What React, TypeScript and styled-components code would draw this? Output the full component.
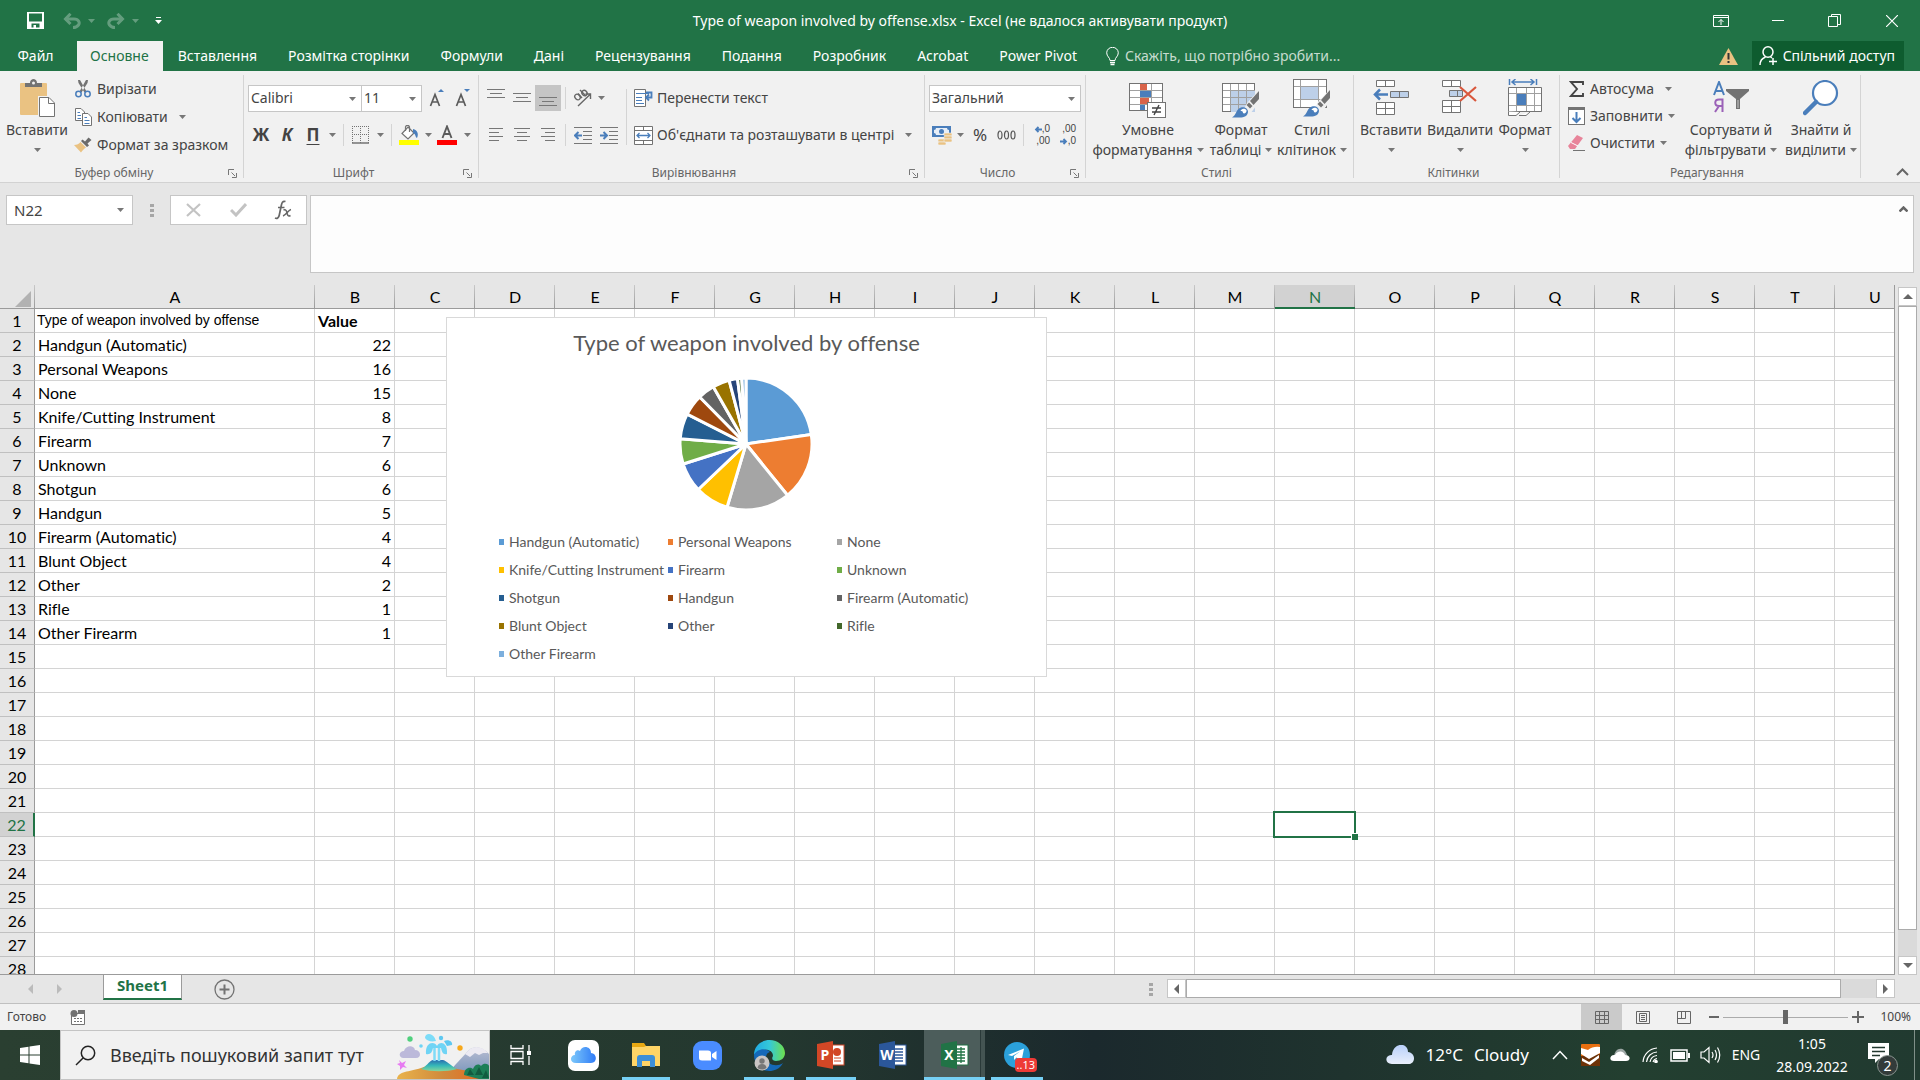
import React from "react";
import styled, { createGlobalStyle, css } from "styled-components";

const GlobalStyle = createGlobalStyle`
  * { box-sizing: border-box; }
  body { margin: 0; overflow: hidden; }
  button, input, select, textarea { font: inherit; color: inherit; }
  button { padding: 0; border: 0; background: none; cursor: default; }
  svg { display: block; flex: none; }
`;

const ui = `"Noto Sans", "Open Sans", sans-serif`;
const cellFont = `Lato, "Open Sans", sans-serif`;
const green = "#217346";
const blue = "#4a7ebb";
const grey = "#777777";

const Window = styled.div`
  display: flex;
  flex-direction: column;
  height: 100vh;
  overflow: hidden;
  background: #e6e6e6;
  color: #444;
  font: 14px/20px ${ui};
`;

/* ---------- Title bar ---------- */
const TitleBar = styled.header`
  display: grid;
  grid-template-columns: 1fr auto 1fr;
  align-items: center;
  height: 41px;
  flex: none;
  background: ${green};
  color: #fff;
`;
const QuickBar = styled.div`
  display: flex;
  align-items: center;
  height: 38px;
  padding-left: 23px;
  gap: 12px;
`;
const QuickButton = styled.button<{ $w: number; $dim?: boolean }>`
  display: flex;
  align-items: center;
  gap: 7px;
  width: ${(p) => p.$w}px;
  height: 28px;
  padding-left: ${(p) => (p.$dim ? 0 : 4)}px;
  opacity: ${(p) => (p.$dim ? 0.3 : 1)};
`;
const DocTitle = styled.h1`
  margin: 0;
  font-size: 14px;
  font-weight: 400;
`;
const WindowButtons = styled.div`
  display: flex;
  justify-content: flex-end;
  height: 38px;
`;
const WindowButton = styled.button`
  display: flex;
  align-items: center;
  justify-content: center;
  width: 57px;
`;

/* ---------- Tabs ---------- */
const TabBar = styled.nav`
  display: flex;
  align-items: stretch;
  height: 30px;
  flex: none;
  padding-right: 16px;
  background: ${green};
  color: #fff;
`;
const Tab = styled.button<{ $active?: boolean; $file?: boolean }>`
  padding: 0 16px 0 15px;
  ${(p) => p.$file && css`width: 77px; padding: 0 6px 0 0;`}
  ${(p) => p.$active && css`padding: 0 14px 0 13px; background: #f1f1f1; color: ${green};`}
`;
const TellMe = styled.label`
  display: flex;
  align-items: center;
  flex: 1;
  gap: 6px;
  padding-left: 13px;
  color: #c7dccf;
`;
const TellMeInput = styled.input`
  flex: 1;
  padding: 0;
  border: 0;
  outline: 0;
  background: none;
  &::placeholder { color: #c7dccf; opacity: 1; }
`;
const WarningButton = styled.button`
  width: 46px;
  display: flex;
  align-items: center;
  justify-content: center;
`;
const ShareButton = styled.button`
  display: flex;
  align-items: center;
  gap: 5px;
  height: 29px;
  padding: 0 9px 0 7px;
  background: #0e5c2f;
  color: #fff;
`;

/* ---------- Ribbon ---------- */
const Ribbon = styled.section`
  display: flex;
  flex: none;
  height: 112px;
  background: #f1f1f1;
  border-bottom: 1px solid #d2d2d2;
`;
const Group = styled.section<{ $w: number }>`
  display: flex;
  flex-direction: column;
  width: ${(p) => p.$w}px;
  flex: none;
  margin: 4px 0;
  border-right: 1px solid #d4d4d4;
`;
const GroupBody = styled.div`
  display: flex;
  flex: 1;
`;
const Caption = styled.footer`
  display: flex;
  align-items: center;
  height: 16px;
  margin-bottom: -3px;
  padding-right: 6px;
  font-size: 12px;
  color: #666;
`;
const CaptionText = styled.span`
  flex: 1;
  text-align: center;
`;
const BigButton = styled.button<{ $w: number }>`
  display: flex;
  flex-direction: column;
  align-items: center;
  width: ${(p) => p.$w}px;
  white-space: nowrap;
`;
const BigIcon = styled.span<{ $low?: boolean }>`
  display: flex;
  align-items: center;
  justify-content: center;
  height: 45px;
  padding-top: ${(p) => (p.$low ? 6 : 0)}px;
`;
const BigLabel = styled.span`
  display: flex;
  align-items: center;
  gap: 4px;
  min-height: 20px;
`;
const SmallColumn = styled.div<{ $pitch: number }>`
  display: flex;
  flex-direction: column;
  & > button { height: ${(p) => p.$pitch}px; }
`;
const SmallButton = styled.button`
  display: flex;
  align-items: center;
  gap: 5px;
  white-space: nowrap;
`;
const SmallIcon = styled.span`
  display: flex;
  justify-content: center;
  width: 18px;
`;
const CaretGap = styled.span<{ $wide: boolean }>`
  padding-left: ${(p) => (p.$wide ? 6 : 0)}px;
`;
const Rows = styled.div`
  display: flex;
  flex-direction: column;
  padding: 10px 0 0 4px;
  gap: 11px;
`;
const Row = styled.div`
  display: flex;
  align-items: center;
  height: 26px;
`;
const IconButton = styled.button<{ $w: number; $on?: boolean }>`
  display: flex;
  align-items: center;
  justify-content: center;
  width: ${(p) => p.$w}px;
  height: 26px;
  background: ${(p) => (p.$on ? "#c5c5c5" : "none")};
`;
const GlyphButton = styled(IconButton)<{ $look?: "bold" | "italic" | "underline" }>`
  font-size: 17px;
  font-weight: ${(p) => (p.$look ? 700 : 400)};
  font-style: ${(p) => (p.$look === "italic" ? "italic" : "normal")};
  text-decoration: ${(p) => (p.$look === "underline" ? "underline" : "none")};
  text-underline-offset: 3px;
`;
const Divider = styled.span<{ $w: number; $h?: number }>`
  width: ${(p) => p.$w}px;
  height: ${(p) => p.$h ?? 22}px;
  background: linear-gradient(#d4d4d4, #d4d4d4) center / 1px 100% no-repeat;
`;
const Combo = styled.div<{ $w: number }>`
  display: flex;
  position: relative;
  width: ${(p) => p.$w}px;
  height: 27px;
  border: 1px solid #c6c6c6;
  background: #fff;
  & + & { border-left: 0; }
  & > svg { position: absolute; right: 5px; top: 11px; pointer-events: none; }
`;
const ComboSelect = styled.select`
  flex: 1;
  padding: 0 2px;
  border: 0;
  outline: 0;
  appearance: none;
  background: none;
`;
const CollapseButton = styled.button`
  align-self: flex-end;
  margin: 0 10px 4px auto;
  width: 14px;
  height: 12px;
`;

/* ---------- Formula bar ---------- */
const FormulaBar = styled.section`
  display: flex;
  align-items: flex-start;
  flex: none;
  height: 102px;
  padding: 12px 6px 0;
`;
const NameBox = styled.label`
  display: flex;
  align-items: center;
  width: 127px;
  height: 30px;
  padding: 0 8px 0 7px;
  border: 1px solid #c6c6c6;
  background: #fff;
  font-size: 15px;
`;
const NameInput = styled.input`
  flex: 1;
  min-width: 0;
  padding: 0;
  border: 0;
  outline: 0;
`;
const DotsHolder = styled.span<{ $w: number }>`
  display: flex;
  align-items: center;
  justify-content: center;
  width: ${(p) => p.$w}px;
  height: 30px;
`;
const FormulaButtons = styled.div`
  display: flex;
  width: 137px;
  height: 30px;
  margin-right: 3px;
  border: 1px solid #c6c6c6;
  background: #fff;
  & > button { flex: 1; display: flex; align-items: center; justify-content: center; }
`;
const FormulaBox = styled.div`
  display: flex;
  flex: 1;
  height: 78px;
  border: 1px solid #c6c6c6;
  background: #fdfdfd;
`;
const FormulaInput = styled.textarea`
  flex: 1;
  border: 0;
  outline: 0;
  resize: none;
  background: none;
`;
const FormulaToggle = styled.button`
  width: 20px;
  height: 26px;
  display: flex;
  align-items: center;
  justify-content: center;
`;

/* ---------- Sheet ---------- */
const SheetArea = styled.main`
  display: flex;
  flex: 1;
  min-height: 0;
`;
const SheetView = styled.div`
  position: relative;
  flex: 1;
  min-width: 0;
  overflow: hidden;
  border-right: 1px solid #9b9b9b;
  border-bottom: 1px solid #9b9b9b;
  background: #fff;
`;
const Grid = styled.table`
  table-layout: fixed;
  width: 1915px;
  border-collapse: separate;
  border-spacing: 0;
  color: #000;
  font: 16px/23px ${cellFont};
  font-variant-ligatures: none;
`;
const ColHead = styled.th<{ $on?: boolean }>`
  height: 24px;
  padding: 0;
  font-weight: 400;
  color: ${(p) => (p.$on ? green : "#000")};
  border-bottom: 1px solid #9b9b9b;
  background:
    linear-gradient(#c8c8c8, #9b9b9b) right / 1px 100% no-repeat,
    ${(p) => (p.$on ? "#d2d2d2" : "#e6e6e6")};
  ${(p) => p.$on && css`box-shadow: inset 0 -1px 0 ${green}; border-bottom-color: ${green};`}
`;
const Corner = styled.td`
  padding: 0;
  border-bottom: 1px solid #9b9b9b;
  background: linear-gradient(#c8c8c8, #9b9b9b) right / 1px 100% no-repeat, #e6e6e6;
  & > svg { margin: 4px 0 0 15px; }
`;
const RowHead = styled.th<{ $on?: boolean }>`
  height: 24px;
  padding: 0;
  font-weight: 400;
  color: ${(p) => (p.$on ? green : "#000")};
  border-right: ${(p) => (p.$on ? `2px solid ${green}` : "1px solid #9b9b9b")};
  border-bottom: 1px solid #c0c0c0;
  background: ${(p) => (p.$on ? "#d2d2d2" : "#e6e6e6")};
`;
const Cell = styled.td<{ $num?: boolean; $look?: "label" | "bold" }>`
  height: 24px;
  padding: 0 3px;
  border-right: 1px solid #d4d4d4;
  border-bottom: 1px solid #d4d4d4;
  text-align: ${(p) => (p.$num ? "right" : "left")};
  white-space: nowrap;
  ${(p) => p.$look === "label" && css`padding-left: 2px; font-family: "Liberation Sans", Arial, sans-serif; font-size: 14px;`}
  ${(p) => p.$look === "bold" && css`font-weight: 700;`}
`;
const ActiveCell = styled(Cell)`
  position: relative;
  &::before {
    content: "";
    position: absolute;
    inset: -2px;
    border: 2px solid ${green};
    z-index: 1;
  }
  &::after {
    content: "";
    position: absolute;
    right: -4px;
    bottom: -4px;
    width: 6px;
    height: 6px;
    background: ${green};
    border: 1px solid #fff;
    border-width: 1px 0 0 1px;
    z-index: 2;
  }
`;
const Chart = styled.figure`
  position: absolute;
  left: 446px;
  top: 32px;
  width: 601px;
  height: 360px;
  margin: 0;
  display: flex;
  flex-direction: column;
  align-items: center;
  border: 1px solid #d9d9d9;
  background: #fff;
  color: #595959;
  font: 14px/28px ${cellFont};
  font-variant-ligatures: none;
`;
const ChartTitle = styled.figcaption`
  margin-top: 11px;
  font-size: 22px;
`;
const PieHolder = styled.div`
  margin: 20px 2px 0 0;
`;
const Legend = styled.ul`
  display: grid;
  grid-template-columns: repeat(3, 169px);
  align-self: stretch;
  margin: 17px 0 0 52px;
  padding: 0;
  list-style: none;
`;
const LegendItem = styled.li<{ $color: string }>`
  display: flex;
  align-items: center;
  gap: 5px;
  white-space: nowrap;
  &::before { content: ""; width: 5px; height: 6px; background: ${(p) => p.$color}; }
`;
const VScroll = styled.div`
  display: flex;
  flex-direction: column;
  width: 19px;
  margin: 2px 3px 0 3px;
  background: #dadada;
`;
const ScrollButton = styled.button`
  display: flex;
  align-items: center;
  justify-content: center;
  width: 19px;
  height: 19px;
  flex: none;
  border: 1px solid #c6c6c6;
  background: #fff;
`;
const VThumb = styled.div`
  flex: 1;
  margin-bottom: 26px;
  border: 1px solid #ababab;
  background: #fff;
`;

/* ---------- Sheet tabs ---------- */
const SheetBar = styled.nav`
  display: flex;
  align-items: center;
  height: 28px;
  flex: none;
  padding-right: 25px;
`;
const SheetNav = styled.div`
  display: flex;
  width: 103px;
  padding-left: 16px;
  & > button { width: 29px; display: flex; justify-content: center; }
`;
const SheetTab = styled.button`
  align-self: flex-start;
  width: 79px;
  height: 26px;
  margin-top: -1px;
  padding-bottom: 3px;
  border: 1px solid #9b9b9b;
  border-width: 0 1px;
  border-bottom: 2px solid ${green};
  background: #fff;
  color: ${green};
  font-size: 15px;
  font-weight: 700;
`;
const AddSheet = styled.button`
  margin-left: 32px;
`;
const HScroll = styled.div`
  display: flex;
  width: 728px;
  margin-bottom: 1px;
  background: #dadada;
`;
const HThumb = styled.div`
  flex: 1;
  margin-right: 35px;
  border: 1px solid #ababab;
  background: #fff;
`;
const Spacer = styled.span`
  flex: 1;
`;

/* ---------- Status bar ---------- */
const StatusBar = styled.footer`
  display: flex;
  align-items: center;
  height: 27px;
  flex: none;
  padding: 0 9px 0 7px;
  border-top: 1px solid #c0c0c0;
  background: #f1f1f1;
  font-size: 12px;
`;
const MacroButton = styled.button`
  margin-left: 24px;
`;
const ViewButton = styled.button<{ $on?: boolean }>`
  display: flex;
  align-items: center;
  justify-content: center;
  width: 41px;
  height: 26px;
  background: ${(p) => (p.$on ? "#cacaca" : "none")};
`;
const ZoomButton = styled.button`
  display: flex;
  align-items: center;
  justify-content: center;
  width: 19px;
  height: 26px;
`;
const ZoomSlider = styled.input`
  appearance: none;
  width: 125px;
  height: 14px;
  margin: 0;
  background: linear-gradient(#ababab, #ababab) center / 100% 1px no-repeat;
  &::-webkit-slider-thumb {
    appearance: none;
    width: 5px;
    height: 14px;
    background: #666;
  }
`;
const ZoomValue = styled.output`
  width: 44px;
  text-align: right;
  font-size: 12px;
`;

/* ---------- Taskbar ---------- */
const Taskbar = styled.footer`
  display: flex;
  height: 50px;
  flex: none;
  background: linear-gradient(90deg, #2a3f31 0%, #24382f 40%, #1b292d 57%, #1f332e 70%, #233f30 85%, #213a30 100%);
  color: #fff;
`;
const StartButton = styled.button`
  display: flex;
  align-items: center;
  justify-content: center;
  width: 60px;
`;
const Search = styled.label`
  display: flex;
  align-items: center;
  width: 430px;
  border: 1px solid #c4c4c4;
  background: #f1f1f1;
  color: #222;
  font-size: 18px;
  & > svg:first-child { margin: 0 14px; }
`;
const SearchInput = styled.input`
  flex: 1;
  min-width: 0;
  padding: 0;
  border: 0;
  outline: 0;
  background: none;
  &::placeholder { color: #333; opacity: 1; }
`;
const TaskButton = styled.button<{ $w?: number; $run?: boolean; $on?: boolean }>`
  position: relative;
  display: flex;
  align-items: center;
  justify-content: center;
  width: ${(p) => p.$w ?? 62}px;
  background: ${(p) => (p.$on ? "linear-gradient(90deg, #4c5d5b 56px, #2a3a39 56px, #2a3a39 57px, #445452 57px)" : "none")};
  ${(p) => p.$run && css`
    &::after {
      content: "";
      position: absolute;
      left: ${p.$on ? 0 : 6}px;
      right: ${p.$on ? 0 : 6}px;
      bottom: 0;
      height: 3px;
      background: #76d0f5;
    }
  `}
`;
const CountBadge = styled.span`
  position: absolute;
  right: 12px;
  bottom: 8px;
  padding: 0 2px;
  border-radius: 4px;
  background: #ee3a36;
  font-size: 11px;
  line-height: 14px;
`;
const Weather = styled.button`
  display: flex;
  align-items: center;
  gap: 11px;
  margin-right: 16px;
  font-size: 17px;
`;
const Tray = styled.div`
  display: flex;
  & > button { width: 30px; display: flex; align-items: center; justify-content: center; }
`;
const Language = styled.button`
  width: 42px;
`;
const Clock = styled.time`
  display: flex;
  flex-direction: column;
  justify-content: center;
  width: 90px;
  text-align: center;
  line-height: 23px;
`;
const Notifications = styled.button`
  position: relative;
  width: 55px;
  margin-right: 2px;
  & > svg { margin-left: 11px; margin-top: -4px; }
`;
const NoticeCount = styled.span`
  position: absolute;
  left: 20px;
  bottom: 4px;
  width: 21px;
  height: 21px;
  border: 1px solid #8b9691;
  border-radius: 50%;
  background: #333b3a;
  font-size: 14px;
  line-height: 19px;
`;
const ShowDesktop = styled.button`
  width: 6px;
  border-left: 1px solid #7f8f88;
`;

/* ---------- Drawings ---------- */
const Caret = () => (
  <svg width="7" height="4"><path d="M0 0H7L3.500 4Z" fill={grey} /></svg>
);
const Launcher = () => (
  <svg width="9" height="9" fill="none" stroke={grey}>
    <path d="M.5 6V.5H6M3.500 3.500L7 7M8.500 4V8.500H4" />
  </svg>
);
const Dots = () => (
  <svg width="4" height="13" fill="#a6a6a6"><path d="M0 0h4v3H0zM0 5h4v3H0zM0 10h4v3H0z" /></svg>
);
const Tri = ({ dir, color = "#666" }: { dir: "l" | "r" | "u" | "d"; color?: string }) => {
  const d = { l: "M6 0V10L1 5Z", r: "M1 0V10L6 5Z", u: "M0 6H10L5 1Z", d: "M0 1H10L5 6Z" }[dir];
  const flat = dir === "u" || dir === "d";
  return <svg width={flat ? 10 : 7} height={flat ? 7 : 10}><path d={d} fill={color} /></svg>;
};
const Lines = ({ w, y }: { w: number[][]; y: number }) => (
  <svg width="18" height="20" stroke={grey}>
    {w.map(([a, b], i) => <path key={i} d={`M${a} ${y + i * 4 + 0.5}H${b}`} />)}
  </svg>
);
const WhiteCaret = () => (
  <svg width="7" height="4"><path d="M0 0H7L3.500 4Z" fill="#fff" /></svg>
);
const UndoIcon = ({ flip }: { flip?: boolean }) => (
  <svg width="18" height="16" fill="none" stroke="#fff" strokeWidth="3">
    <g transform={flip ? "translate(18 0) scale(-1 1)" : undefined}>
      <path d="M2 6H11C16 6 17 10 15.500 12S12 14.500 10 14.500" />
      <path d="M7.500 .8L2.500 6L7.500 11" />
    </g>
  </svg>
);
const PasteIcon = () => (
  <svg width="35" height="38">
    <rect x="0" y="4" width="27" height="32" rx="1" fill="#eac282" />
    <path d="M5 8V4H10C10 1 12 0 13.500 0S17 1 17 4H22V8Z" fill="#737373" />
    <circle cx="13.500" cy="4" r="1.500" fill="#f1f1f1" />
    <path d="M18 17H30L36 23V38H18Z" fill="#f1f1f1" />
    <path d="M19.500 18.500H29L34.500 24V37.500H19.500Z" fill="#fff" stroke="#737373" />
    <path d="M28.500 18.500V24.500H34.500" fill="none" stroke="#737373" />
  </svg>
);
const CutIcon = () => (
  <svg width="16" height="18" fill="none">
    <path d="M3 0H5L11.500 11.500L9.500 12.500L3.500 3ZM13 0H11L4.500 11.500L6.500 12.500L12.500 3Z" fill="#737373" />
    <circle cx="3.500" cy="14" r="2.700" stroke={blue} strokeWidth="1.500" />
    <circle cx="12.500" cy="14" r="2.700" stroke={blue} strokeWidth="1.500" />
  </svg>
);
const CopyIcon = () => (
  <svg width="17" height="18" fill="#fff" stroke="#737373">
    <path d="M.5 .5H6L9.500 4V12.500H.5Z" />
    <path d="M2.500 4.500H5M2.500 7.500H6M2.500 10.500H6" stroke={blue} />
    <path d="M7.500 5.500H13L16.500 9V17.500H7.500Z" />
    <path d="M9.500 9.500H12M9.500 12.500H14.500M9.500 15.500H14.500" stroke={blue} />
  </svg>
);
const BrushIcon = () => (
  <svg width="18" height="16">
    <path d="M0 8C3 8 5 7 6.500 5L12 10.500C10 12 8.500 13 7 15.500Z" fill="#eac282" />
    <path d="M7 4L8.500 2.500L11 4.500L14.500 .5L17.500 3L13.500 6.500L15 8.500L13 10Z" fill="#6b6b6b" />
  </svg>
);
const FontSizeIcon = ({ up }: { up?: boolean }) => (
  <svg width="16" height="20">
    <path d="M1.500 18L6 6.500L10.500 18M3 14H9" fill="none" stroke="#5b5b5b" strokeWidth="1.700" />
    <path d={up ? "M9 4H15L12 1Z" : "M9 1H15L12 4Z"} fill={blue} />
  </svg>
);
const BordersIcon = () => (
  <svg width="17" height="18" fill="none" stroke="#737373">
    <path d="M.5 0V17M8.500 0V17M16.500 0V17M0 .5H17M0 8.500H17" strokeDasharray="1 1" />
    <path d="M0 17H17" strokeWidth="1.500" />
  </svg>
);
const FillIcon = () => (
  <svg width="20" height="20">
    <path d="M9 2L15 8L9 14L3 8.500Z" fill="#fff" stroke="#737373" strokeWidth="1.200" />
    <path d="M6.500 6V2C7 -.2 10 -.2 10.500 2V7" fill="none" stroke="#737373" strokeWidth="1.200" />
    <path d="M14 4C18.500 5 20 9 18 13C16 12 17 9 14 8Z" fill={blue} />
    <rect y="15" width="20" height="5" fill="#ff0" />
  </svg>
);
const FontColorIcon = () => (
  <svg width="20" height="20">
    <path d="M5.500 13L10 1.500L14.500 13M7 9H13" fill="none" stroke="#5b5b5b" strokeWidth="1.900" />
    <rect y="15" width="20" height="5" fill="#f00" />
  </svg>
);
const AngleIcon = () => (
  <svg width="20" height="20" fill="none" stroke="#666" strokeWidth="1.400">
    <ellipse cx="4.500" cy="9" rx="2.400" ry="3" transform="rotate(-45 4.500 9)" />
    <path d="M5 5.500L9 10M7 2L13 8" />
    <ellipse cx="11.500" cy="5" rx="2.400" ry="2.800" transform="rotate(-45 11.500 5)" />
    <path d="M5 18L17 6.500M17.500 11V6H12.500" />
  </svg>
);
const IndentIcon = ({ right }: { right?: boolean }) => (
  <svg width="18" height="17" fill="none" stroke={grey}>
    <path d="M0 .5H18M9 4.500H18M9 8.500H18M9 12.500H18M0 16.500H18" />
    <path d={right ? "M0 8.500H6M3.500 5L7 8.500L3.500 12" : "M1.500 8.500H8M4.500 5L1 8.500L4.500 12"} stroke={blue} strokeWidth="2" />
  </svg>
);
const WrapIcon = () => (
  <svg width="19" height="18" fill="none" stroke="#737373">
    <path d="M.5 17.500V.5H11.500V17.500Z" fill="#fff" stroke="#737373" />
    <path d="M2 4.500H15M2 8.500H8M2 11.500H8M2 14.500H10" stroke={blue} />
    <path d="M12 3.500H17.500V8.500H12M15 5.500L12 8.500L15 11.500" stroke={blue} strokeWidth="1.800" />
  </svg>
);
const MergeIcon = () => (
  <svg width="19" height="19" fill="#fff" stroke="#737373">
    <path d="M.5 .5H18.500V18.500H.5ZM.5 4.500H18.500M.5 14.500H18.500M9.500 .5V4.500M9.500 14.500V18.500" />
    <path d="M3 9.500H16M5.500 7L3 9.500L5.500 12M13.500 7L16 9.500L13.500 12" fill="none" stroke={blue} strokeWidth="1.300" />
  </svg>
);
const MoneyIcon = () => (
  <svg width="20" height="19">
    <rect width="19" height="11" fill={blue} />
    <path d="M2 4Q4 4 4 2H15Q15 4 17 4V7Q15 7 15 9H4Q4 7 2 7Z" fill="#e7eef7" />
    <circle cx="9.500" cy="5.500" r="2.500" fill={blue} />
    <g fill="#eac282" stroke="#f1f1f1" strokeWidth=".6">
      <rect x="6" y="13" width="8" height="3" rx="1" /><rect x="6" y="16" width="8" height="3" rx="1" />
      <rect x="12" y="7" width="8" height="3" rx="1" /><rect x="12" y="10" width="8" height="3" rx="1" />
      <rect x="12" y="13" width="8" height="3" rx="1" />
    </g>
  </svg>
);
const DecimalStack = styled.span`
  display: flex;
  flex-direction: column;
  align-items: flex-end;
  font: 10px/12px "Liberation Sans", Arial, sans-serif;
`;
const DecimalLine = styled.span`
  display: flex;
  align-items: center;
`;
const BlueArrow = ({ right }: { right?: boolean }) => (
  <svg width="8" height="7" fill="none" stroke={blue} strokeWidth="1.800">
    <path d={right ? "M0 3.500H6M3.500 1L6 3.500L3.500 6" : "M8 3.500H2M4.500 1L2 3.500L4.500 6"} />
  </svg>
);
const DecimalIcon = ({ less }: { less?: boolean }) => (
  <DecimalStack>
    <DecimalLine>{less ? ",00" : <><BlueArrow />,0</>}</DecimalLine>
    <DecimalLine>{less ? <><BlueArrow right />,0</> : ",00"}</DecimalLine>
  </DecimalStack>
);
const PaintBrush = () => (
  <g>
    <path d="M38 6L25 20L22 26L28 31L38 18Z" fill="#f1f1f1" />
    <path d="M37 8L28 18L31.500 22L37 16Z" fill="#737373" />
    <path d="M27 19.500L30.500 23L28 25.500L24.500 22Z" fill="#737373" />
    <path d="M10 34.500C14 32 14 28 17 25.500C21 22.500 26 25 26 28.500C26 33 22 34.500 18 34.500Z" fill={blue} />
    <path d="M18.500 28C19 26 22 24.500 24.500 27C25 30 22 31 21 30C21 28 19.500 28 18.500 28Z" fill="#fff" />
  </g>
);
const CondIcon = () => (
  <svg width="38" height="35">
    <rect x=".5" y=".5" width="33" height="27" fill="#fff" stroke="#737373" />
    <path d="M1 7.500H33M1 14.500H33M1 21.500H33M11.500 1V27M22.500 1V27" stroke="#a0a0a0" />
    <path d="M11 1H18V7H11ZM11 15H20V21H11Z" fill="#d9644a" />
    <path d="M11 8H22V14H11ZM11 22H16V27H11Z" fill={blue} />
    <rect x="18.500" y="19.500" width="18" height="15" fill="#fff" stroke="#737373" />
    <path d="M23 25H32M23 29H32M30 22L25 32" stroke="#444" strokeWidth="1.400" />
  </svg>
);
const TableStyleIcon = () => (
  <svg width="38" height="36">
    <rect x=".5" y=".5" width="32" height="28" fill="#fff" stroke="#737373" />
    <rect x="9" y="8" width="24" height="21" fill="#bdd0e9" />
    <path d="M1 7.500H33M1 14.500H33M1 21.500H33M8.500 1V28M16.500 1V28M24.500 1V28" stroke="#a0a0a0" fill="none" />
    <PaintBrush />
  </svg>
);
const CellStyleIcon = () => (
  <svg width="38" height="38">
    <rect x=".5" y=".5" width="33" height="28" fill="#fff" stroke="#737373" />
    <path d="M1 7.500H33M1 20.500H33M7.500 1V28M25.500 1V28" stroke="#a0a0a0" />
    <rect x="8" y="8" width="17" height="12" fill="#bdd0e9" />
    <g transform="translate(0 3)"><PaintBrush /></g>
  </svg>
);
const InsertCellsIcon = () => (
  <svg width="36" height="36" fill="#fff" stroke="#737373">
    <path d="M3.500 .5H21.500V6.500H3.500ZM12.500 .5V6.500M3.500 22.500H21.500V34.500H3.500ZM12.500 22.500V34.500M3.500 28.500H21.500" />
    <path d="M17.500 11.500H35.500V17.500H17.500ZM26.500 11.500V17.500" fill="#bdd0e9" />
    <path d="M2 14.500H15M7 9.500L2 14.500L7 19.500" fill="none" stroke={blue} strokeWidth="2.500" />
  </svg>
);
const DeleteCellsIcon = () => (
  <svg width="36" height="36" fill="#fff" stroke="#737373">
    <path d="M.5 .5H18.500V6.500H.5ZM9.500 .5V6.500M.5 20.500H18.500V32.500H.5ZM9.500 20.500V32.500M.5 26.500H18.500" />
    <path d="M7.500 10.500H20.500V16.500H7.500ZM15.500 10.500V16.500" fill="#bdd0e9" />
    <path d="M18 7L34 21M34 7L18 21" stroke="#d9573c" strokeWidth="2.200" />
  </svg>
);
const FormatCellsIcon = () => (
  <svg width="35" height="38" fill="#fff" stroke="#737373">
    <path d="M1.500 0V6M28.500 0V6M4 3H26M7.500 0L4 3L7.500 6M22.500 0L26 3L22.500 6" fill="none" stroke={blue} strokeWidth="1.500" />
    <path d="M.5 8.500H33.500V32.500H.5Z" />
    <path d="M1 14.500H33M1 26.500H33M8.500 9V32M18.500 9V32M26.500 9V32" stroke="#a0a0a0" />
    <rect x="9" y="15" width="9" height="11" fill={blue} stroke="none" />
    <path d="M.5 32.500V36.500H8L12 33M11 36.500H18L22 33" />
  </svg>
);
const SumIcon = () => (
  <svg width="15" height="16" fill="none" stroke="#444" strokeWidth="1.900">
    <path d="M14 4V1H2L8 8L2 15H14V12" />
  </svg>
);
const FillDownIcon = () => (
  <svg width="17" height="18">
    <rect x=".5" y=".5" width="16" height="17" fill="#fff" stroke="#737373" />
    <rect width="17" height="3" fill="#737373" />
    <path d="M8.500 5V15M4.500 11L8.500 15L12.500 11" fill="none" stroke={blue} strokeWidth="2" />
  </svg>
);
const EraserIcon = () => (
  <svg width="18" height="17">
    <path d="M1 12L10 1L16 4L8 15H3Z" fill="#e8849a" />
    <path d="M4 8.500L11 12" stroke="#fff" />
    <path d="M6 16.500H18" stroke="#737373" />
  </svg>
);
const SortIcon = () => (
  <svg width="36" height="34">
    <path d="M1 14L6 1L11 14M3 10H9" fill="none" stroke={blue} strokeWidth="2" />
    <path d="M9.500 31V18.500H6C1 18.500 1 25 6 25H9.500M6 25L2 31" fill="none" stroke="#9b62b8" strokeWidth="2" />
    <path d="M13 8H36V10L27 18V28H23V18L13 10Z" fill="#737373" />
    <path d="M25 19V27" stroke="#c8c8c8" />
  </svg>
);
const FindIcon = () => (
  <svg width="36" height="36" fill="none" stroke={blue}>
    <circle cx="22" cy="13" r="12" fill="#fff" strokeWidth="2.200" />
    <path d="M13 22L2 33" strokeWidth="4.500" strokeLinecap="round" />
  </svg>
);

const COLORS = ["#5b9bd5", "#ed7d31", "#a5a5a5", "#ffc000", "#4472c4", "#70ad47", "#255e91", "#9e480e", "#636363", "#997300", "#264478", "#43682b", "#7cafdd"];
const DATA: [string, number][] = [
  ["Handgun (Automatic)", 22], ["Personal Weapons", 16], ["None", 15], ["Knife/Cutting Instrument", 8],
  ["Firearm", 7], ["Unknown", 6], ["Shotgun", 6], ["Handgun", 5], ["Firearm (Automatic)", 4],
  ["Blunt Object", 4], ["Other", 2], ["Rifle", 1], ["Other Firearm", 1],
];

const Pie = () => {
  const total = DATA.reduce((s, d) => s + d[1], 0);
  let acc = 0;
  const at = (v: number) => {
    const a = (v / total) * Math.PI * 2;
    return `${67 + 66 * Math.sin(a)} ${67 - 66 * Math.cos(a)}`;
  };
  return (
    <svg width="134" height="134" stroke="#fff" strokeWidth="3" strokeLinejoin="round">
      {DATA.map(([name, v], i) => {
        const from = at(acc);
        acc += v;
        return <path key={name} d={`M67 67L${from}A66 66 0 0 1 ${at(acc)}Z`} fill={COLORS[i]} />;
      })}
    </svg>
  );
};

const COLS = "ABCDEFGHIJKLMNOPQRSTU".split("");
const ROWS = Array.from({ length: 28 }, (_, i) => i + 1);

const OfficeIcon = ({ color, letter, children }: { color: string; letter: string; children: React.ReactNode }) => (
  <svg width="28" height="28">
    <rect x="12" y="4" width="15" height="20" fill="#fff" stroke={color} />
    {children}
    <path d="M0 3L16 0V28L0 25Z" fill={color} />
    <text x="8" y="19" textAnchor="middle" fontFamily="Open Sans" fontWeight="700" fontSize="14" fill="#fff">{letter}</text>
  </svg>
);

const GeyserArt = () => (
  <svg width="92" height="47" viewBox="0 0 92 47">
    <defs>
      <linearGradient id="ground" x1="0" x2="1"><stop offset="0" stopColor="#e9b34c" /><stop offset=".5" stopColor="#d08a3c" /><stop offset="1" stopColor="#e8641c" /></linearGradient>
      <linearGradient id="mount" x1="0" y1="0" x2="0" y2="1"><stop offset="0" stopColor="#b9bdd2" /><stop offset="1" stopColor="#6f8fb8" /></linearGradient>
      <linearGradient id="pool" x1="0" y1="0" x2="0" y2="1"><stop offset="0" stopColor="#2b6fb0" /><stop offset=".5" stopColor="#35b8b8" /><stop offset="1" stopColor="#86d69a" /></linearGradient>
    </defs>
    <path d="M52 40L59 32L72 18C77 14 84 14 92 22V47H52Z" fill="url(#mount)" />
    <path d="M68 22L73 17C79 13 86 15 91 21L86 21L82 23L78 21L73 25Z" fill="#eceaf2" />
    <path d="M0 47C1 39 12 40 24 36L32 33H52L60 37C72 39 84 41 92 47Z" fill="url(#ground)" />
    <path d="M24 37C29 35 32 29 36 28H46C50 29 54 34 60 37C50 40 34 40 24 37Z" fill="url(#pool)" />
    <path d="M37.500 29V14M42 29V14" stroke="#7fdcf7" strokeWidth="2.500" />
    <path d="M29 22C28 9 38 9 40 14C42 9 51 9 50 22C46 23 45 20 44 16H36C35 21 33 23 29 22Z" fill="#6fd4f5" />
    <path d="M28 6C28 2 32 1 35 3C38 5 38 7 39 9C34 10 30 9 28 6Z" fill="#7cdcf8" />
    <circle cx="44" cy="6" r="2.200" fill="#5fc8f0" />
    <path d="M47 9C52 7 56 10 55 13L50 14Z" fill="#5fc8f0" />
    <circle cx="24" cy="14" r="1.800" fill="#6fd4f5" />
    <path d="M6 26C1 25 2 19 7 19C9 13 17 13 18 18C24 18 25 26 19 26Z" fill="#bcb9da" />
    <circle cx="13" cy="7" r="2.700" fill="#4fd07d" />
    <circle cx="63" cy="16" r="2.700" fill="#f7a81b" />
    <path d="M2 28L5 31L9 29L7 33L10 36L6 35L3 38L3 34L0 32L3 31Z" fill="#e77bf2" />
    <path d="M67 43C67 36 73 34 76 37C78 31 83 32 84 34C87 30 92 32 92 34V47H82Z" fill="#1d7f57" />
    <path d="M73 37L70 43H77ZM82 35L78 43H86ZM89 38L85 46H92Z" fill="#125c40" />
  </svg>
);

const GroupCaption = ({ text, launcher }: { text: string; launcher?: boolean }) => (
  <Caption>
    <CaptionText>{text}</CaptionText>
    {launcher && <button aria-label={text}><Launcher /></button>}
  </Caption>
);

const Big = ({ w, icon, label, second, low }: { w: number; icon: React.ReactNode; label: string; second?: string; low?: boolean }) => (
  <BigButton $w={w}>
    <BigIcon $low={low}>{icon}</BigIcon>
    <BigLabel>{label}</BigLabel>
    <BigLabel>{second}<Caret /></BigLabel>
  </BigButton>
);

const Small = ({ icon, label, caret }: { icon: React.ReactNode; label: string; caret?: "near" | "far" }) => (
  <SmallButton>
    <SmallIcon>{icon}</SmallIcon>
    {label}
    {caret && <CaretGap $wide={caret === "far"}><Caret /></CaretGap>}
  </SmallButton>
);

const BodyPad = styled.div<{ $l: number }>`
  display: flex;
  padding-left: ${(p) => p.$l}px;
`;
const AlignPanel = styled.div`
  display: flex;
  align-items: flex-start;
  & > span { margin-top: 14px; }
`;
const TextRows = styled.div`
  display: flex;
  flex-direction: column;
  padding: 10px 0 0 4px;
  gap: 11px;
  & > button { height: 26px; }
`;

export default function App() {
  return (
    <Window>
      <GlobalStyle />
      <TitleBar>
        <QuickBar>
          <QuickButton $w={28} aria-label="Зберегти">
            <svg width="17" height="17"><path d="M0 0H17V17H0Z" fill="#fff" /><path d="M2 1.500H15V9.500H2ZM4.500 11.500H12.500V15.500H4.500Z" fill={green} /><path d="M6.500 13H9V16H6.500Z" fill="#fff" /></svg>
          </QuickButton>
          <QuickButton $w={32} $dim aria-label="Скасувати"><UndoIcon /><WhiteCaret /></QuickButton>
          <QuickButton $w={32} $dim aria-label="Повторити"><UndoIcon flip /><WhiteCaret /></QuickButton>
          <QuickButton $w={14} aria-label="Налаштувати панель">
            <svg width="7" height="7"><path d="M1 0H6V1H1ZM0 3H7L3.500 7Z" fill="#fff" /></svg>
          </QuickButton>
        </QuickBar>
        <DocTitle>Type of weapon involved by offense.xlsx - Excel (не вдалося активувати продукт)</DocTitle>
        <WindowButtons>
          <WindowButton aria-label="Параметри стрічки">
            <svg width="16" height="12" fill="none" stroke="#fff"><path d="M.5 .5H15.500V11.500H.5ZM.5 2.500H15.500M8 10V4.500M5.500 7L8 4.500L10.500 7" /></svg>
          </WindowButton>
          <WindowButton aria-label="Згорнути"><svg width="12" height="2"><path d="M0 0H12V1H0Z" fill="#fff" /></svg></WindowButton>
          <WindowButton aria-label="Відновити">
            <svg width="13" height="13" fill="none" stroke="#fff"><path d="M.5 2.500H9.500V12.500H.5ZM3.500 2.500V.5H12.500V10.500H9.500" /></svg>
          </WindowButton>
          <WindowButton aria-label="Закрити"><svg width="12" height="12"><path d="M0 0L12 12M12 0L0 12" stroke="#fff" strokeWidth="1.200" /></svg></WindowButton>
        </WindowButtons>
      </TitleBar>

      <TabBar>
        <Tab $file>Файл</Tab>
        <Tab $active>Основне</Tab>
        {["Вставлення", "Розмітка сторінки", "Формули", "Дані", "Рецензування", "Подання", "Розробник", "Acrobat", "Power Pivot"].map((t) => (
          <Tab key={t}>{t}</Tab>
        ))}
        <TellMe>
          <svg width="13" height="19" fill="none" stroke="#fff"><path d="M4 13.500C4 10.500 .7 9.500 .7 5.800A5.600 5.300 0 0 1 12.300 5.800C12.300 9.500 9 10.500 9 13.500Z" /><path d="M4 15.500H9M4.500 17.500H8.500" strokeWidth="1.500" /></svg>
          <TellMeInput aria-label="Допомога" placeholder="Скажіть, що потрібно зробити..." />
        </TellMe>
        <WarningButton aria-label="Попередження">
          <svg width="19" height="17"><path d="M9.500 0L19 17H0Z" fill="#eac282" /><path d="M8.500 5H10.500V11.500H8.500ZM8.500 13H10.500V15H8.500Z" fill="#333" /></svg>
        </WarningButton>
        <ShareButton>
          <svg width="19" height="20" fill="none" stroke="#fff" strokeWidth="1.500"><ellipse cx="9" cy="6" rx="5" ry="5.200" /><path d="M1 19C1 14.500 4 12 6.500 11M11.500 11L13 12M14 12V19M10 15.500H18" /></svg>
          Спільний доступ
        </ShareButton>
      </TabBar>

      <Ribbon>
        <Group $w={244}>
          <GroupBody>
            <BodyPad $l={3}><Big w={68} icon={<PasteIcon />} label="Вставити" /></BodyPad>
            <BodyPad $l={3}>
              <SmallColumn $pitch={28}>
                <Small icon={<CutIcon />} label="Вирізати" />
                <Small icon={<CopyIcon />} label="Копіювати" caret="far" />
                <Small icon={<BrushIcon />} label="Формат за зразком" />
              </SmallColumn>
            </BodyPad>
          </GroupBody>
          <GroupCaption text="Буфер обміну" launcher />
        </Group>

        <Group $w={235}>
          <GroupBody>
            <Rows>
              <Row>
                <Combo $w={114}><ComboSelect aria-label="Шрифт"><option>Calibri</option></ComboSelect><Caret /></Combo>
                <Combo $w={60}><ComboSelect aria-label="Розмір шрифту"><option>11</option></ComboSelect><Caret /></Combo>
                <IconButton $w={30} aria-label="Збільшити"><FontSizeIcon up /></IconButton>
                <IconButton $w={22} aria-label="Зменшити"><FontSizeIcon /></IconButton>
              </Row>
              <Row>
                <GlyphButton $w={26} $look="bold">Ж</GlyphButton>
                <GlyphButton $w={26} $look="italic">К</GlyphButton>
                <GlyphButton $w={26} $look="underline">П</GlyphButton>
                <IconButton $w={12} aria-label="Підкреслення"><Caret /></IconButton>
                <Divider $w={11} />
                <IconButton $w={22} aria-label="Межі"><BordersIcon /></IconButton>
                <IconButton $w={18} aria-label="Види меж"><Caret /></IconButton>
                <Divider $w={4} />
                <IconButton $w={31} aria-label="Заливка"><FillIcon /></IconButton>
                <IconButton $w={8} aria-label="Кольори заливки"><Caret /></IconButton>
                <IconButton $w={30} aria-label="Колір тексту"><FontColorIcon /></IconButton>
                <IconButton $w={10} aria-label="Кольори тексту"><Caret /></IconButton>
              </Row>
            </Rows>
          </GroupBody>
          <GroupCaption text="Шрифт" launcher />
        </Group>

        <Group $w={446}>
          <GroupBody>
            <AlignPanel>
              <Rows>
                <Row>
                  <IconButton $w={26} aria-label="Угорі"><Lines y={1} w={[[0, 18], [3, 15], [0, 18]]} /></IconButton>
                  <IconButton $w={26} aria-label="Посередині"><Lines y={5} w={[[0, 18], [3, 15], [0, 18]]} /></IconButton>
                  <IconButton $w={26} $on aria-label="Унизу"><Lines y={9} w={[[0, 18], [3, 15], [0, 18]]} /></IconButton>
                  <Divider $w={9} />
                  <IconButton $w={26} aria-label="Орієнтація"><AngleIcon /></IconButton>
                  <IconButton $w={10} aria-label="Види орієнтації"><Caret /></IconButton>
                </Row>
                <Row>
                  <IconButton $w={26} aria-label="Ліворуч"><Lines y={3} w={[[2, 16], [2, 12], [2, 16], [2, 12]]} /></IconButton>
                  <IconButton $w={26} aria-label="По центру"><Lines y={3} w={[[1, 17], [4, 14], [1, 17], [4, 14]]} /></IconButton>
                  <IconButton $w={26} aria-label="Праворуч"><Lines y={3} w={[[2, 16], [6, 16], [2, 16], [6, 16]]} /></IconButton>
                  <Divider $w={9} />
                  <IconButton $w={26} aria-label="Зменшити відступ"><IndentIcon /></IconButton>
                  <IconButton $w={26} aria-label="Збільшити відступ"><IndentIcon right /></IconButton>
                </Row>
              </Rows>
              <Divider $w={8} $h={56} />
              <TextRows>
                <Small icon={<WrapIcon />} label="Перенести текст" />
                <Small icon={<MergeIcon />} label="Об'єднати та розташувати в центрі" caret="far" />
              </TextRows>
            </AlignPanel>
          </GroupBody>
          <GroupCaption text="Вирівнювання" launcher />
        </Group>

        <Group $w={161}>
          <GroupBody>
            <Rows>
              <Row><Combo $w={152}><ComboSelect aria-label="Формат числа"><option>Загальний</option></ComboSelect><Caret /></Combo></Row>
              <Row>
                <IconButton $w={26} aria-label="Грошовий"><MoneyIcon /></IconButton>
                <IconButton $w={10} aria-label="Валюти"><Caret /></IconButton>
                <GlyphButton $w={30}>%</GlyphButton>
                <IconButton $w={22} aria-label="Роздільник">
                  <svg width="19" height="10" fill="none" stroke="#555" strokeWidth="1.200"><ellipse cx="3" cy="5" rx="2" ry="4" /><ellipse cx="9.500" cy="5" rx="2" ry="4" /><ellipse cx="16" cy="5" rx="2" ry="4" /></svg>
                </IconButton>
                <Divider $w={12} />
                <IconButton $w={26} aria-label="Більше знаків"><DecimalIcon /></IconButton>
                <IconButton $w={26} aria-label="Менше знаків"><DecimalIcon less /></IconButton>
              </Row>
            </Rows>
          </GroupBody>
          <GroupCaption text="Число" launcher />
        </Group>

        <Group $w={268}>
          <GroupBody>
            <BodyPad $l={3}>
              <Big w={118} low icon={<CondIcon />} label="Умовне" second="форматування" />
              <Big w={68} low icon={<TableStyleIcon />} label="Формат" second="таблиці" />
              <Big w={74} icon={<CellStyleIcon />} label="Стилі" second="клітинок" />
            </BodyPad>
          </GroupBody>
          <GroupCaption text="Стилі" />
        </Group>

        <Group $w={206}>
          <GroupBody>
            <BodyPad $l={3}>
              <Big w={68} icon={<InsertCellsIcon />} label="Вставити" />
              <Big w={70} icon={<DeleteCellsIcon />} label="Видалити" />
              <Big w={60} icon={<FormatCellsIcon />} label="Формат" />
            </BodyPad>
          </GroupBody>
          <GroupCaption text="Клітинки" />
        </Group>

        <Group $w={301}>
          <GroupBody>
            <BodyPad $l={7}>
              <SmallColumn $pitch={27}>
                <Small icon={<SumIcon />} label="Автосума" caret="far" />
                <Small icon={<FillDownIcon />} label="Заповнити" caret="near" />
                <Small icon={<EraserIcon />} label="Очистити" caret="near" />
              </SmallColumn>
            </BodyPad>
            <Spacer />
            <Big w={102} icon={<SortIcon />} label="Сортувати й" second="фільтрувати" />
            <Big w={78} icon={<FindIcon />} label="Знайти й" second="виділити" />
          </GroupBody>
          <GroupCaption text="Редагування" />
        </Group>
        <CollapseButton aria-label="Згорнути стрічку">
          <svg width="13" height="8" fill="none" stroke="#666" strokeWidth="2"><path d="M1 7L6.500 1.500L12 7" /></svg>
        </CollapseButton>
      </Ribbon>

      <FormulaBar>
        <NameBox><NameInput aria-label="Ім'я" defaultValue="N22" /><Caret /></NameBox>
        <DotsHolder $w={37}><Dots /></DotsHolder>
        <FormulaButtons>
          <button aria-label="Скасувати"><svg width="15" height="14"><path d="M1 1L14 13M14 1L1 13" stroke="#c3c3c3" strokeWidth="2.200" /></svg></button>
          <button aria-label="Ввести"><svg width="17" height="14" fill="none"><path d="M1 7L6 12L16 1" stroke="#c3c3c3" strokeWidth="3" /></svg></button>
          <button aria-label="Вставити функцію">
            <svg width="19" height="20" fill="none" stroke="#666">
              <path d="M11.500 1.500C8.500 .5 7.800 3 7.300 5.500L5.300 15C4.800 18 3 19 1 18M4 7.500H10.500" strokeWidth="1.700" />
              <path d="M9.500 10C12 9 12.500 11 13 13S14 17 16.500 15.500M17 9.500C14.500 10 12 15 9 16" strokeWidth="1.500" />
            </svg>
          </button>
        </FormulaButtons>
        <FormulaBox>
          <FormulaInput aria-label="Рядок формул" />
          <FormulaToggle aria-label="Згорнути рядок формул"><svg width="9" height="6" fill="none" stroke="#666" strokeWidth="2.500"><path d="M.5 5.500L4.500 1.500L8.500 5.500" /></svg></FormulaToggle>
        </FormulaBox>
      </FormulaBar>

      <SheetArea>
        <SheetView>
          <Grid>
            <colgroup>
              <col style={{ width: 35 }} />
              {COLS.map((c) => <col key={c} style={{ width: c === "A" ? 280 : 80 }} />)}
            </colgroup>
            <thead>
              <tr>
                <Corner><svg width="16" height="16"><path d="M16 0V16H0Z" fill="#b2b2b2" /></svg></Corner>
                {COLS.map((c) => <ColHead key={c} $on={c === "N"}>{c}</ColHead>)}
              </tr>
            </thead>
            <tbody>
              {ROWS.map((r) => {
                const d = DATA[r - 2];
                return (
                  <tr key={r}>
                    <RowHead $on={r === 22}>{r}</RowHead>
                    {COLS.map((c) => {
                      if (r === 22 && c === "N") return <ActiveCell key={c} />;
                      if (r === 1 && c === "A") return <Cell key={c} $look="label">Type of weapon involved by offense</Cell>;
                      if (r === 1 && c === "B") return <Cell key={c} $look="bold">Value</Cell>;
                      if (d && c === "A") return <Cell key={c}>{d[0]}</Cell>;
                      if (d && c === "B") return <Cell key={c} $num>{d[1]}</Cell>;
                      return <Cell key={c} />;
                    })}
                  </tr>
                );
              })}
            </tbody>
          </Grid>
          <Chart>
            <ChartTitle>Type of weapon involved by offense</ChartTitle>
            <PieHolder><Pie /></PieHolder>
            <Legend>
              {DATA.map(([name], i) => <LegendItem key={name} $color={COLORS[i]}>{name}</LegendItem>)}
            </Legend>
          </Chart>
        </SheetView>
        <VScroll>
          <ScrollButton aria-label="Угору"><Tri dir="u" /></ScrollButton>
          <VThumb />
          <ScrollButton aria-label="Униз"><Tri dir="d" /></ScrollButton>
        </VScroll>
      </SheetArea>

      <SheetBar>
        <SheetNav>
          <button aria-label="Попередній аркуш"><Tri dir="l" color="#bbb" /></button>
          <button aria-label="Наступний аркуш"><Tri dir="r" color="#bbb" /></button>
        </SheetNav>
        <SheetTab>Sheet1</SheetTab>
        <AddSheet aria-label="Новий аркуш">
          <svg width="21" height="21" fill="none" stroke="#737373"><circle cx="10.500" cy="10.500" r="9.500" strokeWidth="1.300" /><path d="M10.500 5.500V15.500M5.500 10.500H15.500" strokeWidth="2" /></svg>
        </AddSheet>
        <Spacer />
        <DotsHolder $w={33}><Dots /></DotsHolder>
        <HScroll>
          <ScrollButton aria-label="Ліворуч"><Tri dir="l" /></ScrollButton>
          <HThumb />
          <ScrollButton aria-label="Праворуч"><Tri dir="r" /></ScrollButton>
        </HScroll>
      </SheetBar>

      <StatusBar>
        <span>Готово</span>
        <MacroButton aria-label="Запис макросу">
          <svg width="16" height="15"><path d="M1.500 3.500H14.500V14.500H1.500Z" fill="#fff" stroke="#737373" /><path d="M8 0H15V4H8Z" fill="#737373" /><circle cx="4" cy="3.500" r="3.500" fill="#737373" /><path d="M4 8.500H13M4 11.500H13" stroke="#737373" strokeDasharray="2 1" /></svg>
        </MacroButton>
        <Spacer />
        <ViewButton $on aria-label="Звичайний"><svg width="14" height="13" fill="none" stroke="#666"><path d="M.5 .5H13.500V12.500H.5ZM.5 4.500H13.500M.5 8.500H13.500M4.500 .5V12.500M9.500 .5V12.500" /></svg></ViewButton>
        <ViewButton aria-label="Розмітка сторінки"><svg width="14" height="13" fill="none" stroke="#666"><path d="M.5 .5H13.500V12.500H.5ZM3.500 2.500H10.500V10.500H3.500ZM5 4.500H9M5 6.500H9M5 8.500H9" /></svg></ViewButton>
        <ViewButton aria-label="Сторінковий"><svg width="14" height="13" fill="none" stroke="#666"><path d="M.5 .5H13.500V12.500H.5ZM.5 7.500H8.500V.5M4.500 .5V7.500" /></svg></ViewButton>
        <ZoomButton aria-label="Зменшити"><svg width="10" height="2"><path d="M0 0H10V2H0Z" fill="#666" /></svg></ZoomButton>
        <ZoomSlider type="range" aria-label="Масштаб" min="0" max="100" defaultValue="50" />
        <ZoomButton aria-label="Збільшити"><svg width="12" height="12"><path d="M5 0H7V5H12V7H7V12H5V7H0V5H5Z" fill="#666" /></svg></ZoomButton>
        <ZoomValue>100%</ZoomValue>
      </StatusBar>

      <Taskbar>
        <StartButton aria-label="Пуск">
          <svg width="20" height="20" fill="#fff"><path d="M0 3L8.500 1.800V9.500H0ZM9.500 1.600L20 0V9.500H9.500ZM0 10.500H8.500V18.200L0 17ZM9.500 10.500H20V20L9.500 18.400Z" /></svg>
        </StartButton>
        <Search>
          <svg width="21" height="21" fill="none" stroke="#222" strokeWidth="1.500"><circle cx="13" cy="8" r="6.700" /><path d="M8.300 12.800L1 20" /></svg>
          <SearchInput aria-label="Пошук" placeholder="Введіть пошуковий запит тут" />
          <GeyserArt />
        </Search>
        <TaskButton $w={60} aria-label="Подання завдань">
          <svg width="21" height="20" fill="none" stroke="#fff" strokeWidth="1.300"><path d="M1 0V3.500H13V0M1 20V16.500H13V20M1 6.500H13V13.500H1ZM19 0V6M19 11V20" /><path d="M17 6H21V10H17Z" fill="#fff" stroke="none" /></svg>
        </TaskButton>
        <TaskButton $w={66} aria-label="iCloud">
          <svg width="31" height="31"><defs><linearGradient id="ic"><stop offset="0" stopColor="#7cc8fb" /><stop offset="1" stopColor="#2f7bf6" /></linearGradient></defs><rect width="31" height="31" rx="7" fill="#fff" /><path d="M8 23C1 23 2 15 7 15C6 11 10 9 12 11C14 5 23 6 23 13C29 13 30 23 23 23Z" fill="url(#ic)" /></svg>
        </TaskButton>
        <TaskButton $w={60} $run aria-label="Провідник">
          <svg width="28" height="24"><path d="M0 0H12L14 3H28V23H0Z" fill="#e9a913" /><path d="M0 4H12L14 3H28V23H0Z" fill="#ffd567" /><path d="M5 24V15Q5 12 8 12H20Q23 12 23 15V24H18V18H10V24Z" fill="#3d8fd8" /></svg>
        </TaskButton>
        <TaskButton aria-label="Zoom">
          <svg width="29" height="29"><rect width="29" height="29" rx="9" fill="#4a8cff" /><path d="M6 9.500H15Q18 9.500 18 12V19.500H9Q6 19.500 6 17ZM19 13L23.500 10V19L19 16Z" fill="#fff" /></svg>
        </TaskButton>
        <TaskButton $run aria-label="Edge">
          <svg width="31" height="31">
            <defs><linearGradient id="eg"><stop offset="0" stopColor="#1fa9e3" /><stop offset=".5" stopColor="#35c8d8" /><stop offset="1" stopColor="#6ee04c" /></linearGradient></defs>
            <path d="M0 15C0 6 7 0 15.500 0S31 6 31 13C31 18 27 21 22 21C19 21 17 19 19 16C19 11 14 9 10 10C5 11 1 14 0 15Z" fill="url(#eg)" />
            <path d="M0 15C2 9 12 7 16 12C11 13 11 20 15 23C19 26 25 26 29 23C26 29 20 31 15.500 31C6 31 0 24 0 15Z" fill="#1568b8" />
            <circle cx="8" cy="23" r="7.500" fill="#c9c5c3" /><circle cx="8" cy="21" r="2.700" fill="#777" /><path d="M3.500 28Q4 24 8 24T12.500 28Q8 31 3.500 28Z" fill="#777" />
          </svg>
        </TaskButton>
        <TaskButton $run aria-label="PowerPoint">
          <OfficeIcon color="#d24726" letter="P"><path d="M17 17H24M17 20H24" stroke="#d24726" /><circle cx="20" cy="11" r="4" fill="#d24726" /></OfficeIcon>
        </TaskButton>
        <TaskButton aria-label="Word">
          <OfficeIcon color="#2b579a" letter="W"><path d="M16 8H24M16 11H24M16 14H24M16 17H24M16 20H24" stroke="#2b579a" strokeWidth="1.300" /></OfficeIcon>
        </TaskButton>
        <TaskButton $w={61} $run $on aria-label="Excel">
          <OfficeIcon color="#217346" letter="X"><path d="M16 8H24M16 11H24M16 14H24M16 17H24M16 20H24M20 6V22" stroke="#217346" strokeWidth="1.300" /></OfficeIcon>
        </TaskButton>
        <TaskButton $w={64} $run aria-label="Telegram">
          <svg width="28" height="28"><circle cx="14" cy="14" r="13" fill="#2ba0da" /><path d="M5 14L21 7.500L18.500 20L13.500 16.500L11 19V15L17 10.500L9 15Z" fill="#fff" /></svg>
          <CountBadge>..13</CountBadge>
        </TaskButton>
        <Spacer />
        <Weather>
          <svg width="28" height="21"><defs><linearGradient id="wc" x1="0" y1="0" x2="0" y2="1"><stop offset="0" stopColor="#b8d0fa" /><stop offset="1" stopColor="#e9effb" /></linearGradient></defs><path d="M6 19C-2 19 -1 9 6 10C7 -3 22 -3 22 7C30 8 30 19 22 19Z" fill="url(#wc)" /></svg>
          <span>12°C</span>
          <span>Cloudy</span>
        </Weather>
        <Tray>
          <button aria-label="Приховані піктограми"><svg width="16" height="10" fill="none" stroke="#fff" strokeWidth="1.500"><path d="M1 9L8 1.500L15 9" /></svg></button>
          <button aria-label="Програма"><svg width="19" height="22"><rect width="19" height="22" rx="1" fill="#e86f10" /><path d="M0 12V22H19V10Z" fill="#6d3207" /><path d="M0 4L7 6Q12 2 19 3V9L8 15L0 10Z" fill="#fff" /><path d="M1 14L8 18L18 11V14L9 21L1 17Z" fill="#fff" /></svg></button>
          <button aria-label="OneDrive"><svg width="20" height="14"><path d="M4 9C4 0 14 -3 17 7Z" fill="#9da7a5" /><path d="M4 13C-2 13 0 6 5 7C8 2 14 3 15 7C21 7 21 13 16 13Z" fill="#fff" /></svg></button>
          <button aria-label="Мережа"><svg width="16" height="16" fill="none" stroke="#fff" strokeWidth="1.200"><path d="M1 15A15 15 0 0 1 15 1M4.500 15A11 11 0 0 1 15 5M8 15A8 8 0 0 1 15 8.500M11 15A5 5 0 0 1 15 11.500" /><circle cx="14" cy="14.500" r="1.200" fill="#fff" /></svg></button>
          <button aria-label="Батарея"><svg width="20" height="13"><path d="M1 1H17V12H1Z" fill="none" stroke="#fff" strokeWidth="1.500" /><path d="M3 3H15V10H3ZM18 4H20V9H18Z" fill="#fff" /></svg></button>
          <button aria-label="Гучність"><svg width="21" height="18" fill="none" stroke="#fff" strokeWidth="1.200"><path d="M1 6H4L9 1.500V16.500L4 12H1ZM12 6Q14 9 12 12M15 4Q18 9 15 14M17.500 1.500Q22 9 17.500 16.500" /></svg></button>
        </Tray>
        <Language>ENG</Language>
        <Clock><span>1:05</span><span>28.09.2022</span></Clock>
        <Notifications aria-label="Сповіщення">
          <svg width="21" height="20"><path d="M0 0H21V16H11L7 20V16H0Z" fill="#fff" /><path d="M4 4.500H17M4 8.500H17M4 12.500H12" stroke="#22382f" strokeWidth="1.300" /></svg>
          <NoticeCount>2</NoticeCount>
        </Notifications>
        <ShowDesktop aria-label="Показати робочий стіл" />
      </Taskbar>
    </Window>
  );
}
